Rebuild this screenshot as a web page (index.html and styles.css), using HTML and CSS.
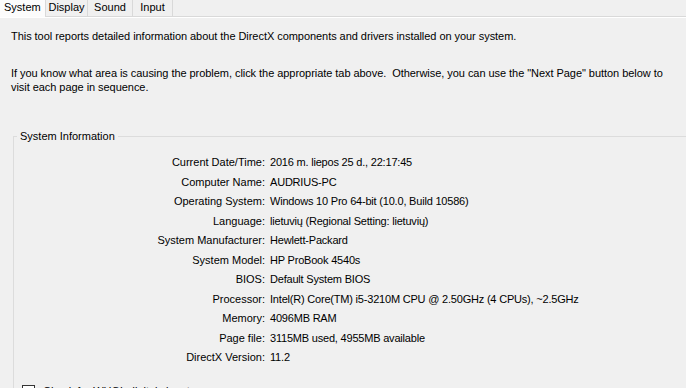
FILE: index.html
```html
<!DOCTYPE html>
<html lang="en">
<head>
    <meta charset="UTF-8">
    <title>DirectX Diagnostic Tool</title>
    <link rel="stylesheet" href="styles.css">
</head>
<body>
    <div class="tabs">
        <div class="tab active">System</div>
        <div class="tab">Display</div>
        <div class="tab">Sound</div>
        <div class="tab">Input</div>
    </div>
    <div class="panel">
        <p class="intro">This tool reports detailed information about the DirectX components and drivers installed on your system.</p>
        <p class="intro second">If you know what area is causing the problem, click the appropriate tab above.&nbsp; Otherwise, you can use the "Next Page" button below to visit each page in sequence.</p>

        <fieldset class="group">
            <legend>System Information</legend>
            <div class="info">
                <span class="key">Current Date/Time:</span><span>2016 m. liepos 25 d., 22:17:45</span>
                <span class="key">Computer Name:</span><span>AUDRIUS-PC</span>
                <span class="key">Operating System:</span><span>Windows 10 Pro 64-bit (10.0, Build 10586)</span>
                <span class="key">Language:</span><span>lietuvių (Regional Setting: lietuvių)</span>
                <span class="key">System Manufacturer:</span><span>Hewlett-Packard</span>
                <span class="key">System Model:</span><span>HP ProBook 4540s</span>
                <span class="key">BIOS:</span><span>Default System BIOS</span>
                <span class="key">Processor:</span><span>Intel(R) Core(TM) i5-3210M CPU @ 2.50GHz (4 CPUs), ~2.5GHz</span>
                <span class="key">Memory:</span><span>4096MB RAM</span>
                <span class="key">Page file:</span><span>3115MB used, 4955MB available</span>
                <span class="key">DirectX Version:</span><span>11.2</span>
            </div>
            <label class="check"><span class="box"></span>Check for WHQL digital signatures</label>
        </fieldset>
    </div>
</body>
</html>
```

FILE: styles.css
```css
html, body {
    margin: 0;
    padding: 0;
    height: 100%;
    overflow: hidden;
}
body {
    background: #f0f0f0;
    font-family: "Liberation Sans", Arial, sans-serif;
    font-size: 11px;
    color: #000;
}
.tabs {
    display: flex;
    height: 16px;
    border-bottom: 1px solid #d9d9d9;
}
.tab {
    height: 16px;
    line-height: 14px;
    text-align: center;
    border-right: 1px solid #d9d9d9;
    box-sizing: border-box;
}
.tab:nth-child(2) { width: 42px; }
.tab:nth-child(3) { width: 45px; }
.tab:nth-child(4) { width: 40px; }
.tab.active {
    width: 46px;
    height: 17px;
    padding-left: 4px;
    text-align: left;
    background: #fcfcfc;
    margin-bottom: -1px;
}
.panel {
    border-top: 1px solid #fff;
    padding: 0 0 0 11px;
}
.intro {
    margin: 11px 0 0;
    line-height: 14px;
    padding-right: 20px;
    letter-spacing: -0.05px;
}
.intro.second {
    margin-top: 23px;
}
.group {
    margin: 36px -40px 0 2px;
    padding: 0;
    border: 1px solid #dcdcdc;
    border-right: none;
}
.group legend {
    margin-left: 3px;
    padding: 0 3px;
    line-height: 13px;
}
.info {
    display: grid;
    grid-template-columns: 251px 1fr;
    column-gap: 5px;
    line-height: 19.5px;
    margin-top: 10px;
}
.key {
    text-align: right;
}
.info span:nth-child(even) {
    letter-spacing: -0.2px;
}
.check {
    display: flex;
    align-items: center;
    gap: 8px;
    margin: 17px 0 0 8px;
}
.box {
    width: 11px;
    height: 11px;
    border: 1px solid #333;
    background: #fff;
}
```
